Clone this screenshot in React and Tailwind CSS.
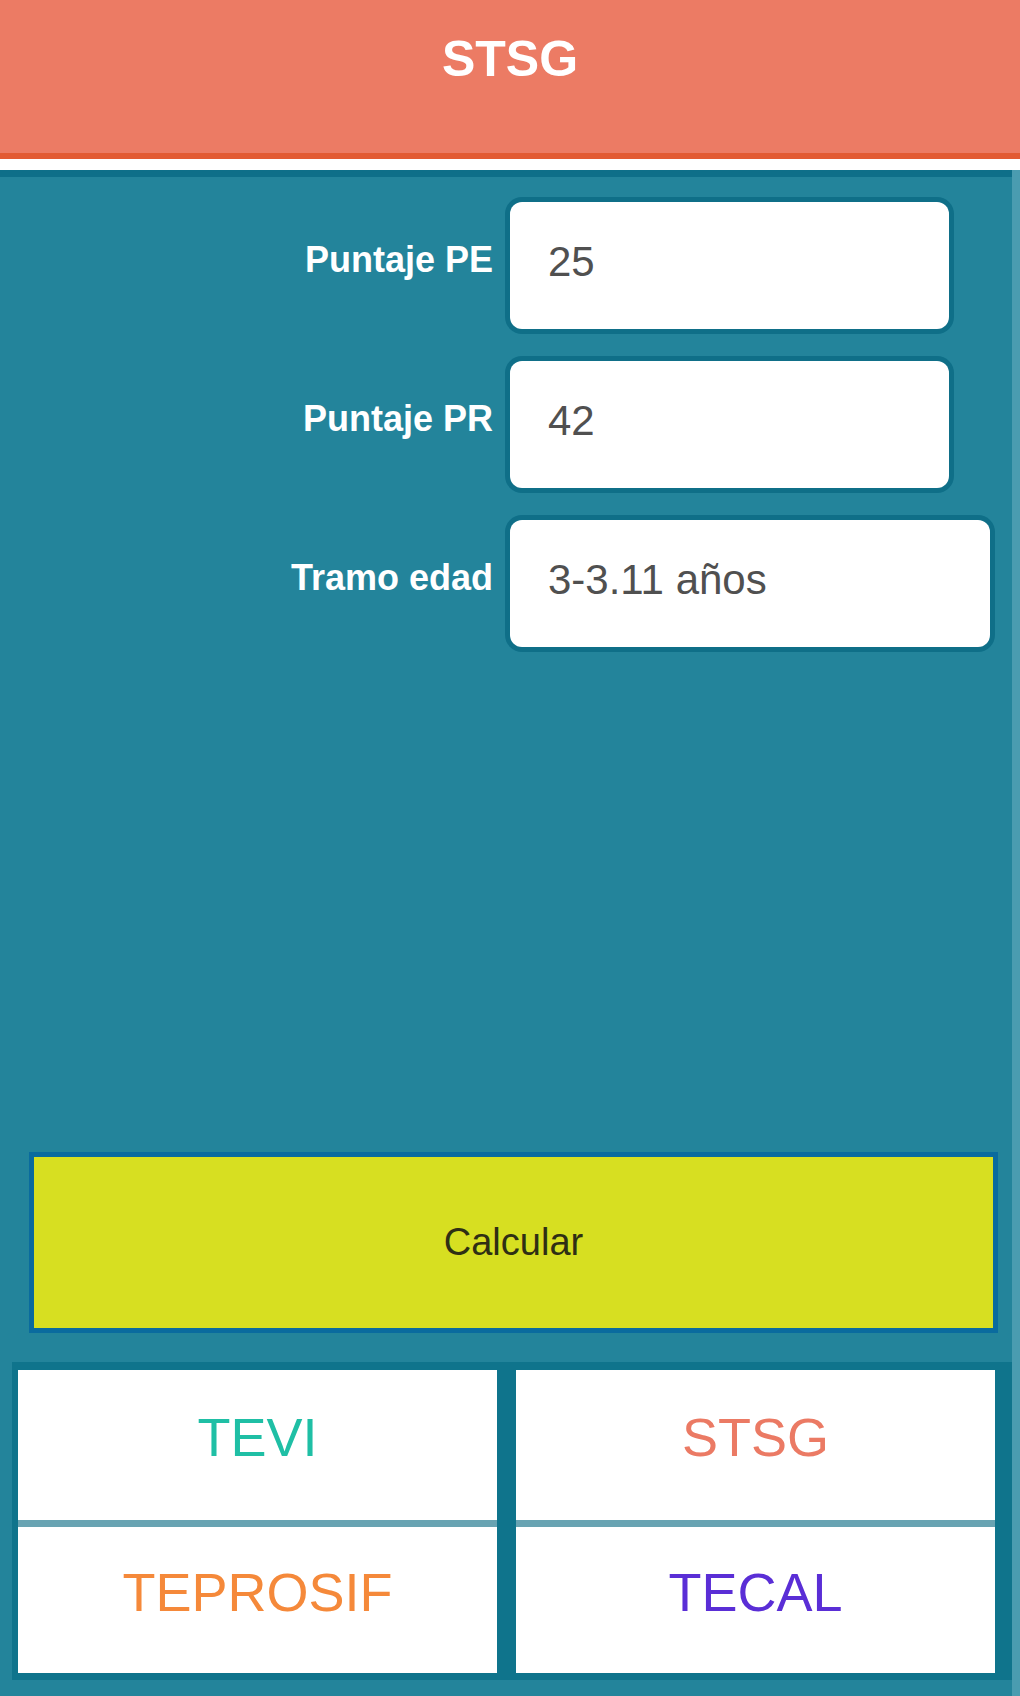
import { useState } from 'react';

const Tests = [
  { name: 'TEVI', color: 'text-[#1fbfa5]' },
  { name: 'STSG', color: 'text-[#eb7a64]' },
  { name: 'TEPROSIF', color: 'text-[#f5893a]' },
  { name: 'TECAL', color: 'text-[#5a2ed6]' },
];

const FieldRow = ({ label, value, wide }) => (
  <div className="flex items-center">
    <label className="w-[493px] pr-0 pb-3 text-right text-[36px] font-bold text-white">
      {label}
    </label>
    <div
      className={`ml-[17px] flex h-[127px] items-center rounded-xl bg-white pl-[38px] pb-2 text-[42px] text-[#505050] ring-[5px] ring-[#0f6f88] ${
        wide ? 'w-[480px]' : 'w-[439px]'
      }`}
    >
      {value}
    </div>
  </div>
);

export default function App() {
  const [Values] = useState({ pe: '25', pr: '42', tramo: '3-3.11 años' });

  return (
    <div className="min-h-[1696px] w-[1020px] bg-[#23849b] font-['Liberation_Sans',Arial,sans-serif]">
      <header className="flex h-[159px] items-center justify-center border-b-[6px] border-[#e25a33] bg-[#ec7b64] pb-[34px]">
        <h1 className="text-[50px] font-bold text-white">STSG</h1>
      </header>
      <div className="h-[11px] bg-white" />

      <div className="border-r-[8px] border-[#4a9cb0]">
        <main className="flex h-[1192px] flex-col border-t-[7px] border-[#0e6f89] bg-[#23849b]">
          <div className="flex flex-col gap-[32px] pt-[25px]">
            <FieldRow label="Puntaje PE" value={Values.pe} />
            <FieldRow label="Puntaje PR" value={Values.pr} />
            <FieldRow label="Tramo edad" value={Values.tramo} wide />
          </div>

          <div className="mt-auto mb-[29px] ml-[29px] mr-[14px] border-[5px] border-[#0a6b9e]">
            <button className="flex h-[171px] w-full items-center justify-center bg-[#d7df21] text-[38px] font-medium text-[#2f2f14]">
              Calcular
            </button>
          </div>
        </main>

        <nav className="bg-[#23849b] pl-[12px] pb-[16px]">
          <div className="grid grid-cols-2 gap-x-[19px] bg-[#0f748c] pt-[8px] pb-[7px] pl-[6px] pr-[17px]">
            {Tests.map((test, index) => (
              <div
                key={index}
                className={`flex items-center justify-center bg-white pb-4 text-[54px] ${test.color} ${
                  index < 2 ? 'h-[157px] border-b-[7px] border-[#68a3b2]' : 'h-[146px]'
                }`}
              >
                {test.name}
              </div>
            ))}
          </div>
        </nav>
      </div>
    </div>
  );
}
